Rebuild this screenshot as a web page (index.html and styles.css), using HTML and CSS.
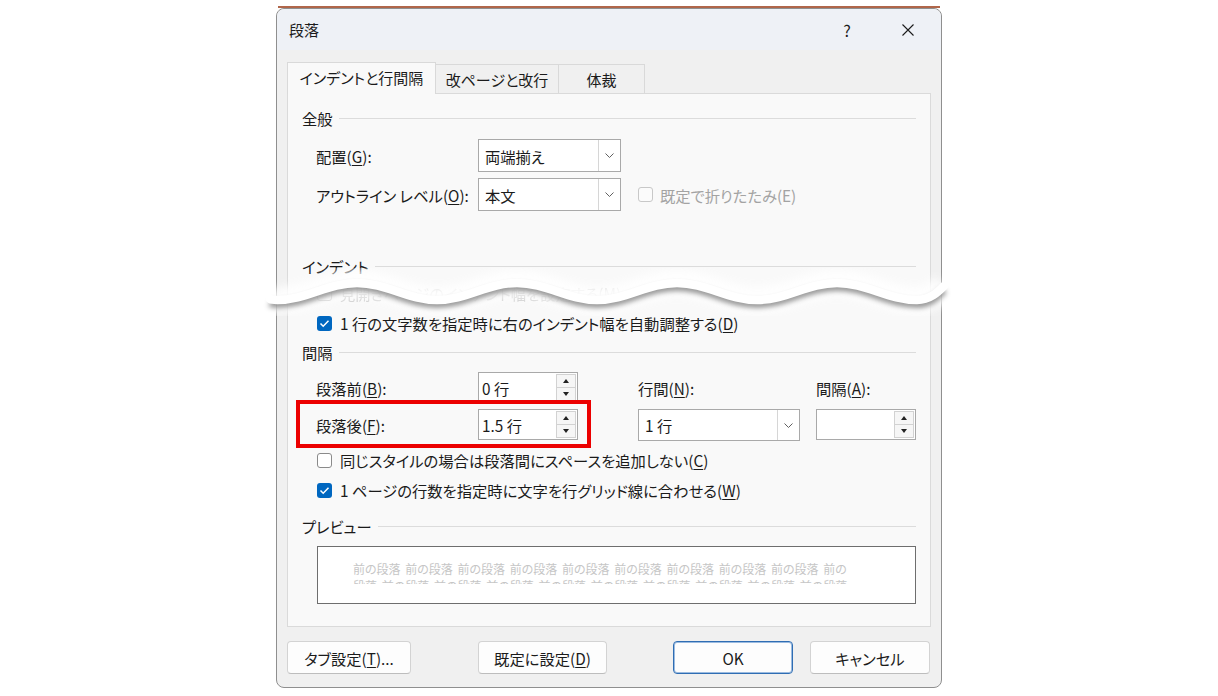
FILE: index.html
```html
<!DOCTYPE html>
<html lang="ja">
<head>
    <meta charset="UTF-8">
    <meta name="viewport" content="width=device-width, initial-scale=1.0">
    <title>段落</title>
    <link rel="stylesheet" href="styles.css">
</head>

<body>
    <div class="stage">
        <div class="backwin"></div>

        <div class="dialog">
            <div class="titlebar">
                <span class="title">段落</span>
                <span class="help">?</span>
                <span class="close">
                    <svg width="12" height="12" viewBox="0 0 12 12"><path d="M0.5 0.5 L11.5 11.5 M11.5 0.5 L0.5 11.5" stroke="#1b1b1b" stroke-width="1.1" fill="none"/></svg>
                </span>
            </div>

            <div class="tabs">
                <div class="tab active">インデントと行間隔</div>
                <div class="tab t2">改ページと改行</div>
                <div class="tab t3">体裁</div>
            </div>

            <div class="panel">
                <div class="group-head">全般</div>
                <div class="rows">
                    <div class="row r1">
                        <span class="lbl">配置(<u>G</u>):</span>
                        <div class="combo w143"><span class="val">両端揃え</span><span class="drop"><svg width="9" height="5" viewBox="0 0 9 5"><polyline points="0.5,0.5 4.5,4.5 8.5,0.5" stroke="#606060" fill="none"/></svg></span></div>
                    </div>
                    <div class="row r2">
                        <span class="lbl">アウトライン レベル(<u>O</u>):</span>
                        <div class="combo w143"><span class="val">本文</span><span class="drop"><svg width="9" height="5" viewBox="0 0 9 5"><polyline points="0.5,0.5 4.5,4.5 8.5,0.5" stroke="#606060" fill="none"/></svg></span></div>
                        <span class="check disabled"></span>
                        <span class="disabled-text">既定で折りたたみ(E)</span>
                    </div>
                </div>

                <div class="group-head indent-head">インデント</div>
                <div class="rows">
                    <div class="crow faded">
                        <span class="check"></span>
                        <span>見開きページのインデント幅を設定する(M)</span>
                    </div>
                    <div class="crow">
                        <span class="check on"><svg width="15" height="15" viewBox="0 0 15 15"><polyline points="3.5,7.5 6.2,10.2 11.5,4.8" stroke="#fff" stroke-width="1.5" fill="none"/></svg></span>
                        <span>1 行の文字数を指定時に右のインデント幅を自動調整する(<u>D</u>)</span>
                    </div>
                </div>

                <div class="group-head space-head">間隔</div>
                <div class="rows">
                    <div class="spacing">
                        <span class="lbl">段落前(<u>B</u>):</span>
                        <div class="spin"><span class="val">0 行</span><span class="btns"><span class="up"></span><span class="down"></span></span></div>
                        <span class="lbl">行間(<u>N</u>):</span>
                        <span class="lbl">間隔(<u>A</u>):</span>

                        <span class="lbl">段落後(<u>F</u>):</span>
                        <div class="spin"><span class="val">1.5 行</span><span class="btns"><span class="up"></span><span class="down"></span></span></div>
                        <div class="combo tall"><span class="val">1 行</span><span class="drop"><svg width="9" height="5" viewBox="0 0 9 5"><polyline points="0.5,0.5 4.5,4.5 8.5,0.5" stroke="#606060" fill="none"/></svg></span></div>
                        <div class="spin"><span class="val"></span><span class="btns"><span class="up"></span><span class="down"></span></span></div>
                    </div>
                    <div class="crow first">
                        <span class="check"></span>
                        <span>同じスタイルの場合は段落間にスペースを追加しない(<u>C</u>)</span>
                    </div>
                    <div class="crow">
                        <span class="check on"><svg width="15" height="15" viewBox="0 0 15 15"><polyline points="3.5,7.5 6.2,10.2 11.5,4.8" stroke="#fff" stroke-width="1.5" fill="none"/></svg></span>
                        <span>1 ページの行数を指定時に文字を行グリッド線に合わせる(<u>W</u>)</span>
                    </div>
                </div>

                <div class="group-head preview-head">プレビュー</div>
                <div class="preview">
                    <div class="preview-text">
                        <div>前の段落 前の段落 前の段落 前の段落 前の段落 前の段落 前の段落 前の段落 前の段落 前の</div>
                        <div>段落 前の段落 前の段落 前の段落 前の段落 前の段落 前の段落 前の段落 前の段落 前の段落</div>
                    </div>
                </div>
            </div>

            <div class="buttons">
                <div class="btn b-tab">タブ設定(<u>T</u>)...</div>
                <div class="btn b-def">既定に設定(<u>D</u>)</div>
                <div class="btn b-ok">OK</div>
                <div class="btn b-cancel">キャンセル</div>
            </div>
        </div>

        <!-- annotation: red frame -->
        <div class="mark"></div>

        <!-- torn edge -->
        <svg class="wave" width="690" height="48" viewBox="0 0 690 48">
            <defs>
                <path id="wv" d="M8 31 C10 32 12 32 15 32 C44 32 66 15 95 15 C124 15 146 32 175 32 C204 32 226 15 255 15 C284 15 306 32 335 32 C364 32 386 15 415 15 C444 15 466 32 495 32 C524 32 546 15 575 15 C604 15 626 32 655 32 C668 32 676 24 682 18"/>
                <filter id="fog" filterUnits="userSpaceOnUse" x="-20" y="-20" width="730" height="90"><feGaussianBlur stdDeviation="4"/></filter>
                <filter id="shade" filterUnits="userSpaceOnUse" x="-20" y="-20" width="730" height="90"><feGaussianBlur stdDeviation="2.5"/></filter>
            </defs>
            <use href="#wv" stroke="#fff" stroke-width="26" fill="none" opacity="0.9" filter="url(#fog)"/>
            <use href="#wv" stroke="#000" stroke-opacity="0.4" stroke-width="8" fill="none" transform="translate(0 4)" filter="url(#shade)"/>
            <use href="#wv" stroke="#fff" stroke-width="8.5" stroke-linecap="round" fill="none"/>
        </svg>
    </div>
</body>
</html>
```

FILE: styles.css
```css
* {
    box-sizing: border-box;
}

body {
    margin: 0;
    background-color: #fff;
    font-family: "Noto Sans CJK JP", "Noto Sans", sans-serif;
    font-size: 15.3px;
    color: #1b1b1b;
    font-feature-settings: "palt";
}

u {
    text-decoration-thickness: 1px;
    text-underline-offset: 2px;
}

.stage {
    position: relative;
    width: 1218px;
    height: 696px;
    overflow: hidden;
}

.backwin {
    margin: 6px 0 0 278px;
    width: 662px;
    height: 2px;
    background-color: #b0664a;
}

.dialog {
    position: relative;
    margin-left: 276px;
    width: 666px;
    height: 680px;
    padding: 0 10px;
    background-color: #f0f0f0;
    border: 1px solid #8f8f8f;
    border-radius: 8px;
}

/* title bar */
.titlebar {
    display: flex;
    align-items: center;
    height: 41px;
    margin: 0 -10px;
    padding-left: 12px;
    background-color: #eef1f6;
    border-radius: 8px 8px 0 0;
}

.title {
    font-size: 15px;
    flex: 1;
}

.help {
    width: 16px;
    text-align: center;
    font-size: 16px;
    margin-right: 47px;
}

.close {
    display: flex;
    margin-right: 27px;
}

/* tabs */
.tabs {
    display: flex;
    align-items: flex-end;
    height: 31px;
    margin-top: 12px;
    position: relative;
    z-index: 1;
}

.tab {
    height: 29px;
    display: flex;
    align-items: center;
    justify-content: center;
    background-color: #f0f0f0;
    border: 1px solid #d9d9d9;
    border-bottom: none;
    font-size: 15px;
}

.tab.active {
    width: 149px;
    height: 32px;
    margin-bottom: -1px;
    background-color: #f9f9f9;
    padding-bottom: 2px;
}

.tab.t2 {
    width: 124px;
    margin-left: -1px;
}

.tab.t3 {
    width: 87px;
    margin-left: -1px;
}

/* panel */
.panel {
    height: 534px;
    background-color: #f9f9f9;
    border: 1px solid #dadada;
    padding: 14px 14px 0 14px;
}

.group-head {
    display: flex;
    align-items: center;
    height: 20px;
}

.group-head::after {
    content: "";
    flex: 1;
    height: 1px;
    margin-left: 6px;
    background-color: #dcdcdc;
}

.indent-head {
    margin-top: 45px;
}

.space-head {
    margin-top: 4px;
}

.preview-head {
    margin-top: 11px;
}

.rows {
    padding-left: 14px;
}

.row {
    display: flex;
    align-items: center;
}

.row.r1 {
    margin-top: 11px;
    height: 33px;
}

.row.r2 {
    margin-top: 6px;
    height: 33px;
}

.lbl {
    width: 162px;
    flex: none;
}

/* combo box */
.combo {
    display: flex;
    height: 33px;
    background-color: #fff;
    border: 1px solid #a9a9a9;
}

.combo.w143 {
    width: 143px;
}

.combo.tall {
    height: 32px;
}

.combo .val {
    flex: 1;
    display: flex;
    align-items: center;
    padding-left: 6px;
}

.combo .drop {
    width: 22px;
    display: flex;
    align-items: center;
    justify-content: center;
    border-left: 1px solid #d6d6d6;
}

/* checkboxes */
.check {
    width: 15px;
    height: 15px;
    flex: none;
    border: 1px solid #8a8a8a;
    border-radius: 3px;
    background-color: #fff;
    display: flex;
}

.check.on {
    border: none;
    background-color: #0067c0;
}

.check.disabled {
    margin-left: 17px;
    border-color: #c8c8c8;
    background-color: #fbfbfb;
}

.disabled-text {
    margin-left: 7px;
    color: #a3a3a3;
}

.crow {
    display: flex;
    align-items: center;
    gap: 8px;
    height: 30px;
    padding-left: 1px;
}

.crow.faded {
    margin-top: 2px;
    color: #a8a8a8;
    opacity: 0.5;
}

.crow.first {
    margin-top: 5px;
}

/* spacing grid */
.spacing {
    display: grid;
    grid-template-columns: 162px 100px 162px 100px;
    row-gap: 6px;
    grid-template-rows: 31px 31px;
    margin-top: 10px;
    align-items: center;
}

.spacing > :nth-child(3),
.spacing > :nth-child(7) {
    margin-left: 60px;
    width: 162px;
}

.spacing > :nth-child(4),
.spacing > :nth-child(8) {
    margin-left: 76px;
}

.spacing > .combo {
    align-self: start;
}

.spin {
    display: flex;
    height: 31px;
    width: 100px;
    background-color: #fff;
    border: 1px solid #a9a9a9;
}

.spin .val {
    flex: 1;
    display: flex;
    align-items: center;
    padding-left: 3px;
}

.spin .btns {
    width: 20px;
    margin: 1px 1px 1px 0;
    display: flex;
    flex-direction: column;
}

.spin .up,
.spin .down {
    flex: 1;
    display: flex;
    align-items: center;
    justify-content: center;
    background-color: #f6f6f6;
    border: 1px solid #d2d2d2;
}

.spin .down {
    border-top: none;
}

.spin .up::after {
    content: "";
    border-left: 3.5px solid transparent;
    border-right: 3.5px solid transparent;
    border-bottom: 4px solid #222;
}

.spin .down::after {
    content: "";
    border-left: 3.5px solid transparent;
    border-right: 3.5px solid transparent;
    border-top: 4px solid #222;
}

/* preview */
.preview {
    margin: 10px 0 0 15px;
    width: 599px;
    height: 58px;
    background-color: #fff;
    border: 1px solid #6e6e6e;
    padding: 13px 0 0 35px;
}

.preview-text {
    height: 24px;
    overflow: hidden;
    font-size: 12px;
    line-height: 17px;
    color: #c6c6c6;
    word-spacing: 2px;
    white-space: nowrap;
}

/* buttons */
.buttons {
    display: flex;
    margin-top: 14px;
}

.btn {
    height: 33px;
    display: flex;
    align-items: center;
    justify-content: center;
    background-color: #fdfdfd;
    border: 1px solid #d3d3d3;
    border-bottom-color: #bdbdbd;
    border-radius: 4px;
}

.b-tab {
    width: 124px;
}

.b-def {
    width: 129px;
    margin-left: 67px;
}

.b-ok {
    width: 120px;
    margin-left: 66px;
    border: 1px solid #2f6db3;
    box-shadow: inset 0 0 0 1px #9bbbe0;
}

.b-cancel {
    width: 120px;
    margin-left: 17px;
}

/* overlays */
.mark {
    position: absolute;
    left: 296px;
    top: 400px;
    width: 295px;
    height: 48px;
    border: 4px solid #ec0000;
}

.wave {
    position: absolute;
    left: 262px;
    top: 268px;
}
```
